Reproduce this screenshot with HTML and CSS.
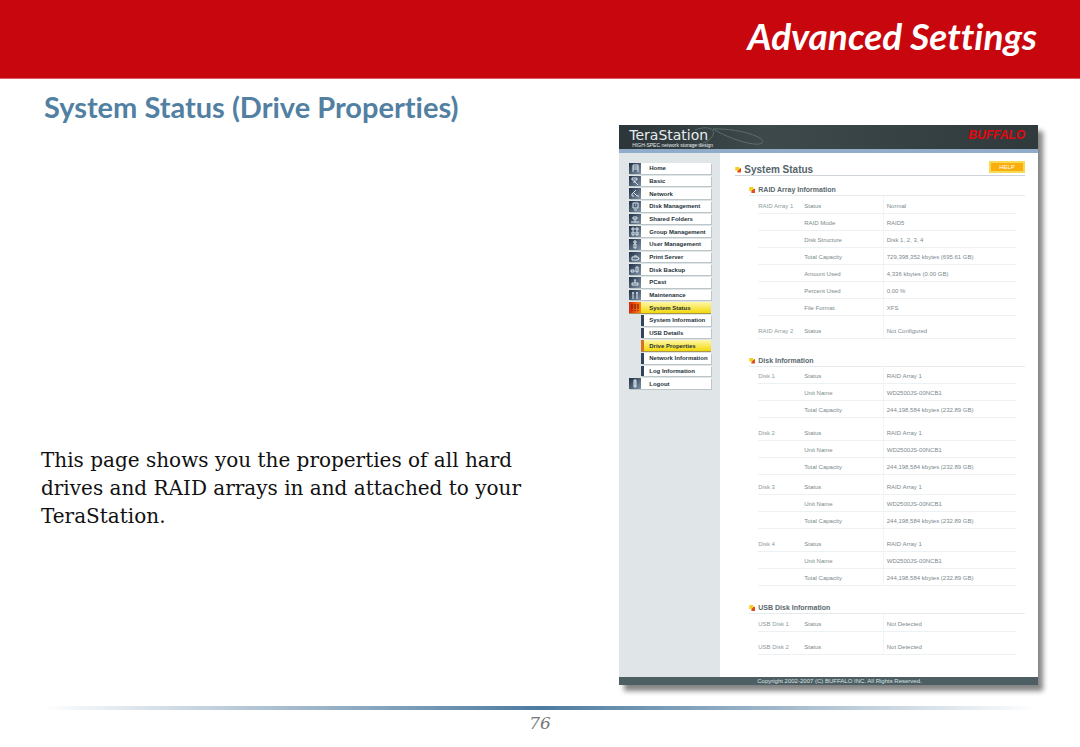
FILE: index.html
```html
<!DOCTYPE html>
<html lang="en">
<head>
<meta charset="utf-8">
<meta name="viewport" content="width=device-width, initial-scale=1">
<title>Advanced Settings</title>
<link rel="stylesheet" href="styles.css">
</head>
<body>
<header class="banner"><h1>Advanced Settings</h1></header>
<main class="page">
  <section class="intro">
    <h2>System Status (Drive Properties)</h2>
    <p>This page shows you the properties of all hard drives and RAID arrays in and attached to your TeraStation.</p>
  </section>
  <section class="console" aria-label="TeraStation console">
    <header class="console-head">
      <svg class="swirl" viewBox="0 0 170 24" aria-hidden="true"><path d="M76 5C88 0 100 4 92 13 88 18 80 20 72 20M94 4C118 3 148 12 143 18 138 22 112 15 94 4" fill="none" stroke="#5c6d6e" stroke-width="1"/></svg>
      <div class="brand"><b>TeraStation</b><small>HIGH-SPEC network storage design</small></div>
      <strong class="maker">BUFFALO</strong>
    </header>
    <div class="console-body">
      <nav class="side">
        <ul>
          <li><a href="#"><svg viewBox="0 0 12 11"><path d="M4 9V2h5v7M4 4h5M4 6h5"/></svg><span>Home</span></a></li>
          <li><a href="#"><svg viewBox="0 0 12 11"><path d="M3 2h5v2H3zM5 5l4 4M4 6h3"/></svg><span>Basic</span></a></li>
          <li><a href="#"><svg viewBox="0 0 12 11"><path d="M7 2L3 6v2h2M5 5l3 3h2"/></svg><span>Network</span></a></li>
          <li><a href="#"><svg viewBox="0 0 12 11"><path d="M4 2h5v5H4zM6 4h1M5 9h3"/></svg><span>Disk Management</span></a></li>
          <li><a href="#"><svg viewBox="0 0 12 11"><path d="M4 3h4v2H4zM2 8h8M6 5v3"/></svg><span>Shared Folders</span></a></li>
          <li><a href="#"><svg viewBox="0 0 12 11"><path d="M3 2h2v2H3zM7 2h2v2H7zM3 6h2v3H3zM7 6h2v3H7z"/></svg><span>Group Management</span></a></li>
          <li><a href="#"><svg viewBox="0 0 12 11"><path d="M5 2h2v2H5zM5 5h2v4H5z"/></svg><span>User Management</span></a></li>
          <li><a href="#"><svg viewBox="0 0 12 11"><path d="M3 5h6l1 2-2 1H3zM5 4h3"/></svg><span>Print Server</span></a></li>
          <li><a href="#"><svg viewBox="0 0 12 11"><path d="M2 6h3v2H2zM7 3h2v5H7z"/></svg><span>Disk Backup</span></a></li>
          <li><a href="#"><svg viewBox="0 0 12 11"><path d="M3 6h6v2H3zM6 3v3M5 3h2"/></svg><span>PCast</span></a></li>
          <li><a href="#"><svg viewBox="0 0 12 11"><path d="M4 2v7M8 2v7M3 3h2M7 3h2"/></svg><span>Maintenance</span></a></li>
          <li class="on"><a href="#"><svg viewBox="0 0 12 11"><path d="M3 2v5M6 2v5M9 2v5M3 8v1M6 8v1M9 8v1"/></svg><span>System Status</span></a></li>
          <li class="sub"><a href="#"><span>System Information</span></a></li>
          <li class="sub"><a href="#"><span>USB Details</span></a></li>
          <li class="sub on"><a href="#" aria-current="page"><span>Drive Properties</span></a></li>
          <li class="sub"><a href="#"><span>Network Information</span></a></li>
          <li class="sub"><a href="#"><span>Log Information</span></a></li>
          <li><a href="#"><svg viewBox="0 0 12 11"><path d="M5 2h2v7H5zM6 2v7"/></svg><span>Logout</span></a></li>
        </ul>
      </nav>
      <div class="content">
        <div class="title"><h3><i class="mark"></i>System Status</h3><button type="button">HELP</button></div>
        <h4><i class="mark"></i>RAID Array Information</h4>
        <table>
          <tr><th>RAID Array 1</th><td>Status</td><td>Normal</td></tr>
          <tr><th></th><td>RAID Mode</td><td>RAID5</td></tr>
          <tr><th></th><td>Disk Structure</td><td>Disk 1, 2, 3, 4</td></tr>
          <tr><th></th><td>Total Capacity</td><td>729,398,352 kbytes (695.61 GB)</td></tr>
          <tr><th></th><td>Amount Used</td><td>4,336 kbytes (0.00 GB)</td></tr>
          <tr><th></th><td>Percent Used</td><td>0.00 %</td></tr>
          <tr><th></th><td>File Format</td><td>XFS</td></tr>
          <tr class="group"><th>RAID Array 2</th><td>Status</td><td>Not Configured</td></tr>
        </table>
        <h4><i class="mark"></i>Disk Information</h4>
        <table>
          <tr><th>Disk 1</th><td>Status</td><td>RAID Array 1</td></tr>
          <tr><th></th><td>Unit Name</td><td>WD2500JS-00NCB1</td></tr>
          <tr><th></th><td>Total Capacity</td><td>244,198,584 kbytes (232.89 GB)</td></tr>
          <tr class="group"><th>Disk 2</th><td>Status</td><td>RAID Array 1</td></tr>
          <tr><th></th><td>Unit Name</td><td>WD2500JS-00NCB1</td></tr>
          <tr><th></th><td>Total Capacity</td><td>244,198,584 kbytes (232.89 GB)</td></tr>
          <tr class="group tight"><th>Disk 3</th><td>Status</td><td>RAID Array 1</td></tr>
          <tr><th></th><td>Unit Name</td><td>WD2500JS-00NCB1</td></tr>
          <tr><th></th><td>Total Capacity</td><td>244,198,584 kbytes (232.89 GB)</td></tr>
          <tr class="group"><th>Disk 4</th><td>Status</td><td>RAID Array 1</td></tr>
          <tr><th></th><td>Unit Name</td><td>WD2500JS-00NCB1</td></tr>
          <tr><th></th><td>Total Capacity</td><td>244,198,584 kbytes (232.89 GB)</td></tr>
        </table>
        <h4><i class="mark"></i>USB Disk Information</h4>
        <table>
          <tr><th>USB Disk 1</th><td>Status</td><td>Not Detected</td></tr>
          <tr class="group"><th>USB Disk 2</th><td>Status</td><td>Not Detected</td></tr>
        </table>
      </div>
    </div>
    <footer class="console-foot">Copyright 2002-2007 (C) BUFFALO INC. All Rights Reserved.</footer>
  </section>
</main>
<footer class="page-foot"><hr><span>76</span></footer>
</body>
</html>
```
FILE: styles.css
```css
* { box-sizing: border-box; }
body { margin: 0; background: #fff; color: #111; font-family: "Liberation Sans", Arial, sans-serif; }
h1, h2, h3, h4, p, ul { margin: 0; padding: 0; }
ul { list-style: none; }

.banner { display: flex; justify-content: flex-end; padding: 14px 43px 21px; background: #c8060e; border-bottom: 1px solid #d9626a; }
.banner h1 { font: italic bold 37px/43px Lato, sans-serif; font-variant-ligatures: none; color: #fff; }

.page { display: grid; grid-template-columns: minmax(0, 1fr) 42%; column-gap: 60px; padding: 0 42px 0 41px; align-items: start; }
.intro { padding-top: 8px; }
.intro h2 { font: bold 29px/40px Lato, sans-serif; font-variant-ligatures: none; color: #5280a2; padding-left: 3px; white-space: nowrap; }
.intro p { margin-top: 319px; font: 20px/28px "DejaVu Serif", serif; max-width: 500px; }

.console { margin-top: 46px; background: #fff; box-shadow: 5px 6px 5px #858585; }
.console-head { position: relative; display: flex; justify-content: space-between; align-items: flex-start; height: 28px; padding: 3px 13px 0 10px; background: linear-gradient(90deg, #2c3539, #3d494b 35%, #303a3d); border-bottom: 4px solid #91abcb; }
.swirl { position: absolute; left: 0; top: 0; width: 170px; height: 24px; }
.brand { position: relative; display: flex; flex-direction: column; color: #e7eded; }
.brand b { font: 14px/14px "DejaVu Sans", sans-serif; }
.brand small { font: 5px/6px "Liberation Sans", sans-serif; padding-left: 3px; }
.maker { font: italic bold 12px/14px "Liberation Sans", sans-serif; color: #e8040c; }

.console-body { display: grid; grid-template-columns: 101px 1fr; }
.side { background: #e0e6e7; padding: 10px 9px 0 10px; }
.side ul { display: grid; grid-auto-rows: minmax(0, 1fr); gap: 2px; height: 226px; }
.side li { display: flex; min-height: 0; }
.side a { flex: 1; display: flex; align-items: center; overflow: hidden; background: #fff; color: #26323a; text-decoration: none; font-size: 6px; line-height: 8px; font-weight: bold; white-space: nowrap; box-shadow: 1px 1px 0 #bcc6c8; }
.side svg { flex: none; width: 12px; height: 11px; margin-right: 8px; background: linear-gradient(135deg, #1f2e45, #8194a6); fill: none; stroke: #dde6ec; stroke-width: 1; }
.side .on a { background: linear-gradient(#fff7a8, #f2d90c); box-shadow: 0 1px 0 #a79455; }
.side .on svg { background: linear-gradient(90deg, #dc2408, #ff8a12); stroke: #611407; }
.side .sub { padding-left: 12px; }
.side .sub a { border-left: 3px solid #33455c; padding-left: 5px; }
.side .sub.on a { border-left-color: #d9731a; }

.content { padding: 10px 13px 22px 15px; }
.title { display: flex; justify-content: space-between; align-items: flex-start; height: 13px; border-bottom: 1px solid #cfd3da; }
.title h3 { display: flex; align-items: center; gap: 3px; font-size: 10px; line-height: 13px; color: #55636a; }
.title button { width: 36px; height: 12px; margin: -2px 0 0; padding: 0; border: 2px solid #f5da55; background: #faae0c; color: #fff; font: 6px/8px "Liberation Sans", sans-serif; }
.mark { flex: none; width: 6px; height: 6px; background: linear-gradient(135deg, #f5cf1f 50%, #e0501c 51%); clip-path: polygon(0 0, 65% 0, 65% 30%, 100% 30%, 100% 100%, 35% 100%, 35% 65%, 0 65%); }
.content h4 { display: flex; align-items: center; gap: 3px; margin: 9px 0 0 14px; height: 11px; border-bottom: 1px solid #e6ebed; font-size: 7px; line-height: 10px; color: #5b696e; }
.content table + h4 { margin-top: 17px; }
.content table { width: calc(100% - 32px); margin-left: 23px; border-collapse: collapse; table-layout: fixed; font-size: 6px; line-height: 7px; color: #7b898d; }
.content th, .content td { height: 17px; padding: 0 0 3px; border-bottom: 1px solid #edf1f3; text-align: left; font-weight: normal; vertical-align: bottom; }
.content th { width: 46px; color: #8d999d; }
.content td:nth-child(2) { width: 79px; }
.content td:nth-child(3) { padding-left: 3px; border-left: 1px solid #f2f5f6; }
.content .group > * { height: 23px; }
.content .tight > * { height: 20px; }

.console-foot { padding-left: 138px; background: #4d5f62; color: #dbe2e2; font-size: 6px; line-height: 8px; }

.page-foot { display: flex; flex-direction: column; align-items: center; padding: 21px 42px 0; }
.page-foot hr { width: 100%; height: 4px; margin: 0; border: 0; background: linear-gradient(90deg, #fff, #a5bbcd 25%, #4c7ba0 50%, #a5bbcd 75%, #fff); }
.page-foot span { font: italic 17px/20px "DejaVu Serif", serif; color: #777; padding-top: 3px; }
```
